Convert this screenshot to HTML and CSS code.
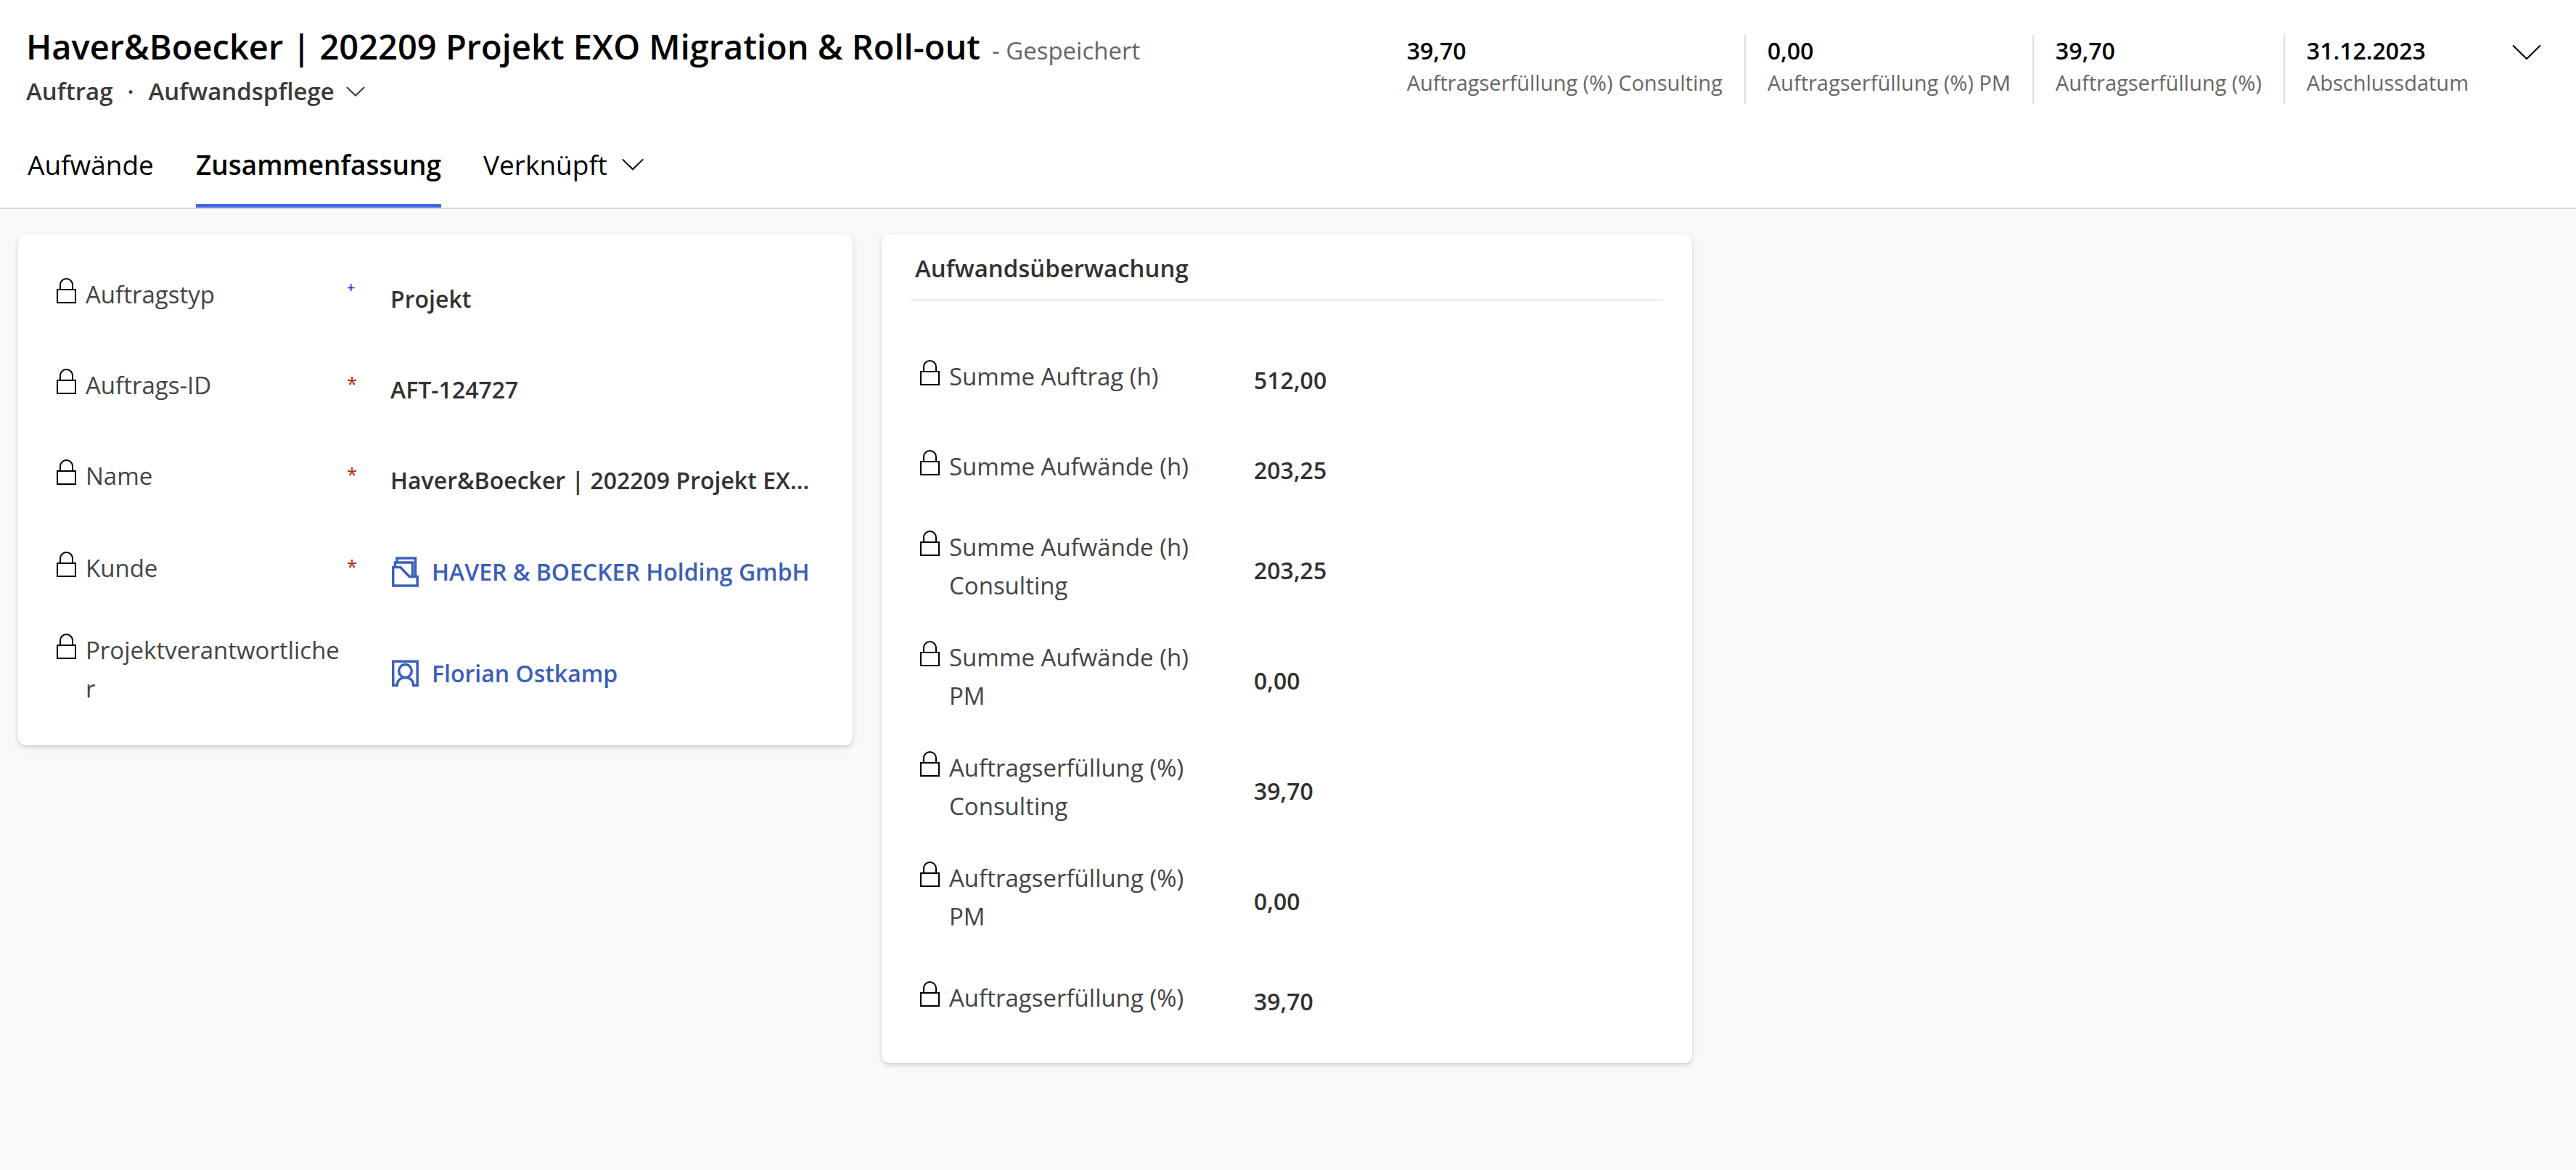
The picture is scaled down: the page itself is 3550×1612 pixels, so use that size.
FILE: index.html
```html
<!DOCTYPE html>
<html lang="de">
<head>
<meta charset="utf-8">
<meta name="viewport" content="width=device-width, initial-scale=1">
<title>Haver&amp;Boecker | 202209 Projekt EXO Migration &amp; Roll-out</title>
<link rel="stylesheet" href="styles.css">
</head>
<body>
<svg class="sprite" aria-hidden="true">
  <symbol id="lock" viewBox="0 0 27 35"><path d="M1 16h25v18H1zM5 16V9.500a8.500 8.500 0 0 1 17 0V16" fill="none" stroke="currentColor" stroke-width="2"/></symbol>
  <symbol id="chevron" viewBox="0 0 40 22"><path d="M1 1.500l19 18.500 19-18.500" fill="none" stroke="currentColor" stroke-width="2" vector-effect="non-scaling-stroke"/></symbol>
  <symbol id="account" viewBox="0 0 37 42"><path d="M7 7V2h25.500v25M4.500 14V8H28.500v19M1.700 14.500h10l12.500 13h11v12.500h-33.500z" fill="none" stroke="currentColor" stroke-width="3.500"/></symbol>
  <symbol id="person" viewBox="0 0 37 42"><path d="M7 37.300H1.700v-33h33.500v33H30M7 39c0-8 4.500-12.500 11.500-12.500S30 31 30 39" fill="none" stroke="currentColor" stroke-width="3.500"/><ellipse cx="18.500" cy="17.500" rx="8.800" ry="9" fill="none" stroke="currentColor" stroke-width="3.500"/></symbol>
</svg>

<header class="header">
  <div class="header-top">
    <div class="record">
      <div class="record-title">
        <h1 class="title">Haver&amp;Boecker | 202209 Projekt EXO Migration &amp; Roll-out</h1>
        <span class="save-state">- Gespeichert</span>
      </div>
      <div class="record-sub">
        <span>Auftrag</span>
        <span class="dot">·</span>
        <button class="form-switch" type="button">Aufwandspflege <svg class="chevron chevron-small"><use href="#chevron"/></svg></button>
      </div>
    </div>
    <div class="stats">
      <div class="stat"><div class="stat-value">39,70</div><div class="stat-label">Auftragserfüllung (%) Consulting</div></div>
      <div class="stat"><div class="stat-value">0,00</div><div class="stat-label">Auftragserfüllung (%) PM</div></div>
      <div class="stat"><div class="stat-value">39,70</div><div class="stat-label">Auftragserfüllung (%)</div></div>
      <div class="stat"><div class="stat-value">31.12.2023</div><div class="stat-label">Abschlussdatum</div></div>
      <button class="expand" type="button" aria-label="Kopfzeile erweitern"><svg class="chevron chevron-large"><use href="#chevron"/></svg></button>
    </div>
  </div>
  <nav class="tabs" role="tablist">
    <button class="tab" type="button" role="tab" aria-selected="false">Aufwände</button>
    <button class="tab tab-active" type="button" role="tab" aria-selected="true">Zusammenfassung</button>
    <button class="tab" type="button" role="tab" aria-selected="false">Verknüpft <svg class="chevron chevron-medium"><use href="#chevron"/></svg></button>
  </nav>
</header>

<main class="content">
  <section class="card card-general">
    <div class="row">
      <label class="label" for="typ"><svg class="lock"><use href="#lock"/></svg><span class="label-text">Auftragstyp</span><span class="mark mark-recommended">+</span></label>
      <input class="value" id="typ" value="Projekt" readonly>
    </div>
    <div class="row">
      <label class="label" for="id"><svg class="lock"><use href="#lock"/></svg><span class="label-text">Auftrags-ID</span><span class="mark">*</span></label>
      <input class="value" id="id" value="AFT-124727" readonly>
    </div>
    <div class="row">
      <label class="label" for="name"><svg class="lock"><use href="#lock"/></svg><span class="label-text">Name</span><span class="mark">*</span></label>
      <input class="value" id="name" value="Haver&amp;Boecker | 202209 Projekt EX..." readonly>
    </div>
    <div class="row row-lookup">
      <div class="label"><svg class="lock"><use href="#lock"/></svg><span class="label-text" id="kunde">Kunde</span><span class="mark">*</span></div>
      <a class="value lookup" href="#kunde" aria-describedby="kunde"><svg class="entity"><use href="#account"/></svg>HAVER &amp; BOECKER Holding GmbH</a>
    </div>
    <div class="row row-lookup">
      <div class="label"><svg class="lock"><use href="#lock"/></svg><span class="label-text" id="pv">Projektverantwortlicher</span></div>
      <a class="value lookup" href="#pv" aria-describedby="pv"><svg class="entity"><use href="#person"/></svg>Florian Ostkamp</a>
    </div>
  </section>

  <section class="card card-effort">
    <h2 class="card-title">Aufwandsüberwachung</h2>
    <div class="row">
      <label class="label" for="s1"><svg class="lock"><use href="#lock"/></svg><span class="label-text">Summe Auftrag (h)</span></label>
      <input class="value" id="s1" value="512,00" readonly>
    </div>
    <div class="row">
      <label class="label" for="s2"><svg class="lock"><use href="#lock"/></svg><span class="label-text">Summe Aufwände (h)</span></label>
      <input class="value" id="s2" value="203,25" readonly>
    </div>
    <div class="row">
      <label class="label" for="s3"><svg class="lock"><use href="#lock"/></svg><span class="label-text">Summe Aufwände (h) Consulting</span></label>
      <input class="value" id="s3" value="203,25" readonly>
    </div>
    <div class="row">
      <label class="label" for="s4"><svg class="lock"><use href="#lock"/></svg><span class="label-text">Summe Aufwände (h) PM</span></label>
      <input class="value" id="s4" value="0,00" readonly>
    </div>
    <div class="row">
      <label class="label" for="s5"><svg class="lock"><use href="#lock"/></svg><span class="label-text">Auftragserfüllung (%) Consulting</span></label>
      <input class="value" id="s5" value="39,70" readonly>
    </div>
    <div class="row">
      <label class="label" for="s6"><svg class="lock"><use href="#lock"/></svg><span class="label-text">Auftragserfüllung (%) PM</span></label>
      <input class="value" id="s6" value="0,00" readonly>
    </div>
    <div class="row">
      <label class="label" for="s7"><svg class="lock"><use href="#lock"/></svg><span class="label-text">Auftragserfüllung (%)</span></label>
      <input class="value" id="s7" value="39,70" readonly>
    </div>
  </section>
</main>
</body>
</html>
```
FILE: styles.css
```css
* {
  box-sizing: border-box;
}

body {
  margin: 0;
  min-height: 100vh;
  background: #faf9f8;
  color: #323130;
  font-family: "Segoe UI", "Open Sans", "Noto Sans", sans-serif;
  font-size: 33px;
}

button,
input {
  margin: 0;
  padding: 0;
  border: 0;
  background: none;
  color: inherit;
  font: inherit;
}

.sprite {
  display: none;
}

/* Header */

.header {
  background: #fff;
  border-bottom: 2px solid #d8dada;
}

.header-top {
  display: flex;
  justify-content: space-between;
  padding: 32px 48px 16px 36px;
}

.record-title {
  display: flex;
  align-items: baseline;
  gap: 16px;
}

.title {
  margin: 0;
  color: #000;
  font-size: 47px;
  font-weight: 600;
  line-height: 64px;
}

.save-state {
  color: #666;
}

.record-sub {
  display: flex;
  gap: 20px;
  margin-top: 6px;
  color: #3b3a39;
  font-weight: 600;
  line-height: 48px;
}

.form-switch {
  display: flex;
  align-items: center;
  gap: 16px;
}

.chevron {
  flex: none;
}

.chevron-small {
  width: 26px;
  height: 14px;
}

.chevron-medium {
  width: 30px;
  height: 17px;
}

.chevron-large {
  width: 40px;
  height: 22px;
}

.stats {
  display: flex;
  align-items: flex-start;
  padding-top: 16px;
}

.stat {
  height: 95px;
  padding: 0 30px;
  line-height: 44px;
}

.stat + .stat {
  border-left: 2px solid #dcdcdc;
}

.stat-value {
  color: #000;
  font-size: 32px;
  font-weight: 600;
}

.stat-label {
  color: #666;
  font-size: 29px;
}

.expand {
  display: flex;
  align-items: center;
  height: 48px;
  margin-left: 30px;
  color: #000;
}

.tabs {
  display: flex;
  gap: 58px;
  padding: 0 38px;
}

.tab {
  display: flex;
  align-items: center;
  gap: 20px;
  height: 120px;
  color: #000;
  font-size: 37px;
}

.tab-active {
  font-weight: 600;
  box-shadow: inset 0 -5px #4169e1;
}

/* Form sections */

.content {
  display: grid;
  grid-template-columns: 1150fr 1117fr 1153fr;
  align-items: start;
  gap: 40px;
  padding: 35px 25px;
}

.card {
  padding-bottom: 29px;
  border-radius: 10px;
  background: #fff;
  box-shadow: 0 3px 7px rgba(0, 0, 0, 0.13), 0 1px 2px rgba(0, 0, 0, 0.11);
}

.card-general {
  padding-top: 20px;
}

.card-title {
  margin: 0 40px 42px;
  padding: 20px 6px 16px;
  border-bottom: 2px solid #eaeaea;
  font-size: 33px;
  font-weight: 600;
  line-height: 53px;
}

.row {
  display: grid;
  grid-template-columns: 460px 1fr;
  align-items: center;
  min-height: 124px;
  padding: 23px 30px 23px 53px;
}

.card-general .row {
  min-height: 125px;
}

.card-general .row-lookup {
  min-height: 128px;
}

.label {
  display: flex;
  align-items: flex-start;
  color: #444;
  line-height: 53px;
}

.lock {
  flex: none;
  width: 27px;
  height: 35px;
  margin: 4px 13px 0 0;
  color: #000;
}

.label-text {
  width: 354px;
  overflow-wrap: anywhere;
}

.mark {
  margin-left: 6px;
  color: #c21a0a;
  font-size: 26px;
  line-height: 48px;
}

.mark-recommended {
  color: #0000f0;
  font-size: 20px;
  line-height: 34px;
}

.value {
  width: 100%;
  margin-top: 12px;
  font-size: 32px;
  font-weight: 600;
  line-height: 44px;
  text-overflow: ellipsis;
}

.lookup {
  display: flex;
  align-items: center;
  gap: 18px;
  padding-left: 2px;
  color: #3b5fb9;
  text-decoration: none;
  white-space: nowrap;
}

.entity {
  flex: none;
  width: 37px;
  height: 42px;
}
```
